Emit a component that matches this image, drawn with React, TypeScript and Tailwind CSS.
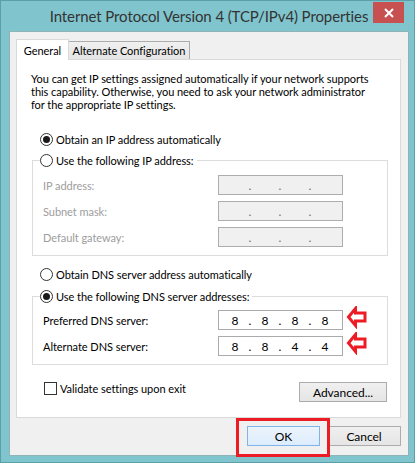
import type { ReactNode } from "react"

const ui = "font-['Lato',sans-serif] text-[11px] leading-[13px] tracking-[-0.05px]"

function Radio({ checked = false, children }: { checked?: boolean; children: ReactNode }) {
  return (
    <span className="flex h-[13px] items-center">
      <span className="flex h-[13px] w-[13px] shrink-0 items-center justify-center rounded-full border border-[#333] bg-white">
        {checked && <span className="h-[7px] w-[7px] rounded-full bg-[#1a1a1a]" />}
      </span>
      <span className="ml-[3px] whitespace-nowrap text-black">{children}</span>
    </span>
  )
}

function IpBox({ parts, disabled = false }: { parts?: string[]; disabled?: boolean }) {
  const cells = parts ?? ["", "", "", ""]
  return (
    <div
      className={`flex h-[20px] w-[125px] items-center border pl-[3px] text-[12px] ${
        disabled ? "border-[#adadad] bg-[#f0f0f0] text-[#6d6d6d]" : "border-[#ababab] bg-white text-black"
      }`}
    >
      {cells.map((p, i) => (
        <div key={i} className="flex items-center">
          <span className="w-[26px] text-center">{p}</span>
          {i < 3 && <span className="w-[4px] text-center">.</span>}
        </div>
      ))}
    </div>
  )
}

// hand-drawn outline arrow pointing at the field
function RedArrow() {
  return (
    <svg className="absolute left-full top-[-4px] ml-[2px]" width="23" height="23" viewBox="0 0 23 23">
      <path
        d="M3.5 11 L10.5 2.5 V7 H20 V15 H10.5 V19.5 Z"
        fill="none"
        stroke="#ed1c24"
        strokeWidth="3"
        strokeLinejoin="miter"
      />
    </svg>
  )
}

function FieldRow({ label, disabled, parts, arrow }: { label: string; disabled?: boolean; parts?: string[]; arrow?: boolean }) {
  return (
    <div className="flex h-[20px] items-center justify-between">
      <span className={disabled ? "text-[#9d9d9d]" : "text-black"}>{label}</span>
      <div className="relative">
        <IpBox parts={parts} disabled={disabled} />
        {arrow && <RedArrow />}
      </div>
    </div>
  )
}

function Button({ children, primary = false, className = "" }: { children: ReactNode; primary?: boolean; className?: string }) {
  return (
    <div
      className={`flex h-[20px] items-center justify-center border text-[12px] text-black ${
        primary
          ? "border-[#7eb4ea] bg-gradient-to-b from-[#ecf4fc] to-[#dcecfc]"
          : "border-[#acacac] bg-gradient-to-b from-[#f0f0f0] to-[#e5e5e5]"
      } ${className}`}
    >
      {children}
    </div>
  )
}

export default function App() {
  return (
    <div className={`${ui} flex h-[463px] w-[415px] flex-col border border-[#5d9fa8] bg-[#80c5cd] pb-[6px] pl-[8px] pr-[5px]`}>
      {/* title bar */}
      <div className="relative flex h-[30px] shrink-0 items-center justify-center">
        <span className="text-[15px] leading-[18px] tracking-[-0.1px] text-[#333]">
          Internet Protocol Version 4 (TCP/IPv4) Properties
        </span>
        <div className="absolute right-[5px] top-[1px] flex h-[21px] w-[31px] items-center justify-center bg-[#c75050]">
          <svg width="10" height="10" viewBox="0 0 10 10">
            <path d="M1 1 L9 9 M9 1 L1 9" stroke="#fff" strokeWidth="2" />
          </svg>
        </div>
      </div>

      {/* dialog body */}
      <div className="flex flex-1 flex-col border border-[#8fb3b8] bg-[#f0f0f0] pb-[9px] pl-[6px] pr-[7px] pt-[7px]">
        {/* tabs */}
        <div className="flex items-end">
          <div className="relative z-10 mb-[-1px] flex h-[21px] w-[53px] items-center justify-center border border-b-0 border-[#d9d9d9] bg-white">
            General
          </div>
          <div className="ml-[-1px] flex h-[18px] w-[122px] items-center justify-center whitespace-nowrap border border-b-0 border-[#acacac] bg-gradient-to-b from-[#f0f0f0] to-[#e5e5e5]">
            Alternate Configuration
          </div>
        </div>

        <div className="flex w-[385px] flex-col border border-[#d9d9d9] bg-white pb-[15px] pt-[12px]">
          <p className="pl-[14px] text-black">
            You can get IP settings assigned automatically if your network supports
            <br />
            this capability. Otherwise, you need to ask your network administrator
            <br />
            for the appropriate IP settings.
          </p>

          <div className="mt-[22px] pl-[23px]">
            <Radio checked>Obtain an IP address automatically</Radio>
          </div>

          <fieldset className="ml-[15px] mt-[8px] w-[356px] border border-[#dcdcdc] pb-[8px] pl-[10px] pr-[44px]">
            <legend className="ml-[-3px] pr-[3px]">
              <Radio>Use the following IP address:</Radio>
            </legend>
            <div className="flex flex-col gap-[6px] pt-[8px]">
              <FieldRow label="IP address:" disabled />
              <FieldRow label="Subnet mask:" disabled />
              <FieldRow label="Default gateway:" disabled />
            </div>
          </fieldset>

          <div className="mt-[12px] pl-[23px]">
            <Radio>Obtain DNS server address automatically</Radio>
          </div>

          <fieldset className="ml-[15px] mt-[9px] w-[356px] border border-[#dcdcdc] pb-[8px] pl-[10px] pr-[44px]">
            <legend className="ml-[-3px] pr-[3px]">
              <Radio checked>Use the following DNS server addresses:</Radio>
            </legend>
            <div className="flex flex-col gap-[6px] pt-[7px]">
              <FieldRow label="Preferred DNS server:" parts={["8", "8", "8", "8"]} arrow />
              <FieldRow label="Alternate DNS server:" parts={["8", "8", "4", "4"]} arrow />
            </div>
          </fieldset>

          <div className="mt-[17px] flex items-start justify-between pl-[27px] pr-[13px]">
            <span className="flex h-[13px] items-center">
              <span className="h-[13px] w-[13px] border border-[#333] bg-white" />
              <span className="ml-[3px] text-black">Validate settings upon exit</span>
            </span>
            <Button className="w-[88px]">Advanced...</Button>
          </div>
        </div>

        {/* OK / Cancel */}
        <div className="mt-[8px] flex justify-end gap-[7px]">
          <div className="relative">
            <Button primary className="w-[73px]">OK</Button>
            <div className="absolute -bottom-[11px] -left-[11px] -right-[10px] -top-[8px] z-10 border-[3px] border-[#ed1c24]" />
          </div>
          <Button className="w-[74px]">Cancel</Button>
        </div>
      </div>
    </div>
  )
}
